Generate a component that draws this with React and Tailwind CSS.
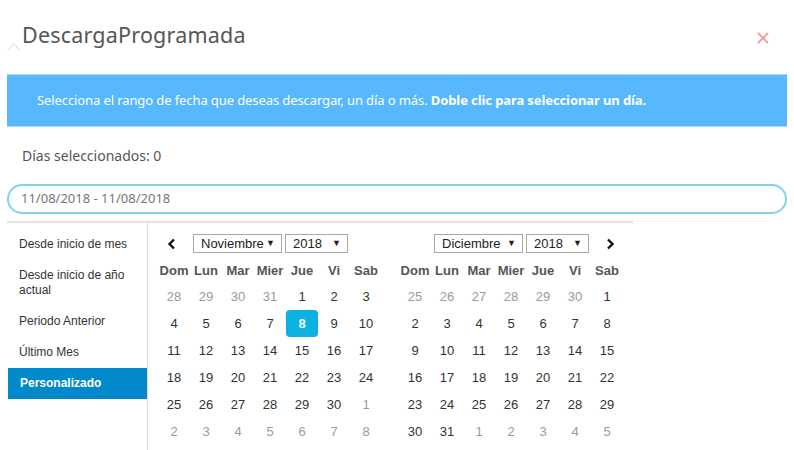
import React from "react";

const headers = ["Dom", "Lun", "Mar", "Mier", "Jue", "Vi", "Sab"];

const nov = [
  [28, 1], [29, 1], [30, 1], [31, 1], [1, 0], [2, 0], [3, 0],
  [4, 0], [5, 0], [6, 0], [7, 0], [8, 2], [9, 0], [10, 0],
  [11, 0], [12, 0], [13, 0], [14, 0], [15, 0], [16, 0], [17, 0],
  [18, 0], [19, 0], [20, 0], [21, 0], [22, 0], [23, 0], [24, 0],
  [25, 0], [26, 0], [27, 0], [28, 0], [29, 0], [30, 0], [1, 1],
  [2, 1], [3, 1], [4, 1], [5, 1], [6, 1], [7, 1], [8, 1],
];
const dic = [
  [25, 1], [26, 1], [27, 1], [28, 1], [29, 1], [30, 1], [1, 0],
  [2, 0], [3, 0], [4, 0], [5, 0], [6, 0], [7, 0], [8, 0],
  [9, 0], [10, 0], [11, 0], [12, 0], [13, 0], [14, 0], [15, 0],
  [16, 0], [17, 0], [18, 0], [19, 0], [20, 0], [21, 0], [22, 0],
  [23, 0], [24, 0], [25, 0], [26, 0], [27, 0], [28, 0], [29, 0],
  [30, 0], [31, 0], [1, 1], [2, 1], [3, 1], [4, 1], [5, 1],
];

function Select({ label, w }) {
  return (
    <div
      className={`${w} h-[19px] border border-[#a9a9a9] bg-white flex items-center justify-between pl-[7px] pr-[6px] text-[13px] text-[#222]`}
    >
      <span>{label}</span>
      <span className="text-[9px] text-[#222]">▼</span>
    </div>
  );
}

function Month({ days, left }) {
  return (
    <div className="w-[224px]">
      <div className="h-[29px] flex items-center">
        {left ? (
          <>
            <svg width="10" height="12" viewBox="0 0 10 12" className="ml-[9px] mr-[16px]">
              <path d="M7 1.5 L2.5 6 L7 10.5" stroke="#111" strokeWidth="2.4" fill="none" />
            </svg>
            <Select label="Noviembre" w="w-[89px]" />
            <div className="w-[3px]" />
            <Select label="2018" w="w-[63px]" />
          </>
        ) : (
          <>
            <div className="w-[35px]" />
            <Select label="Diciembre" w="w-[89px]" />
            <div className="w-[3px]" />
            <Select label="2018" w="w-[63px]" />
            <svg width="10" height="12" viewBox="0 0 10 12" className="ml-[16px]">
              <path d="M3 1.5 L7.5 6 L3 10.5" stroke="#111" strokeWidth="2.4" fill="none" />
            </svg>
          </>
        )}
      </div>
      <div className="grid grid-cols-7 h-[25px] items-center text-[13px] font-bold text-[#555] text-center">
        {headers.map((h) => (
          <div key={h}>{h}</div>
        ))}
      </div>
      <div className="grid grid-cols-7 text-[13px] text-center">
        {days.map(([d, s], i) => (
          <div key={i} className="h-[27px] flex items-center justify-center">
            {s === 2 ? (
              <div className="w-[32px] h-[27px] rounded-[4px] bg-[#0bb2df] text-white font-bold flex items-center justify-center">
                {d}
              </div>
            ) : (
              <span className={s === 1 ? "text-[#9a9a9a]" : "text-[#333]"}>{d}</span>
            )}
          </div>
        ))}
      </div>
    </div>
  );
}

export default function App() {
  const sidebar = [
    "Desde inicio de mes",
    "Desde inicio de año actual",
    "Periodo Anterior",
    "Último Mes",
  ];
  return (
    <div className="w-[794px] h-[450px] bg-white overflow-hidden relative" style={{ fontFamily: '"Liberation Sans", Arial, sans-serif' }}>
      <div className="h-[74px] relative" style={{ fontFamily: '"Noto Sans", "Liberation Sans", sans-serif' }}>
        <div className="absolute left-[22px] top-[19px] text-[21.5px] text-[#555] tracking-[0.2px]">DescargaProgramada</div>
        <svg className="absolute left-[7px] top-[42px]" width="14" height="9" viewBox="0 0 14 9">
          <path d="M1 8 L7 2 L13 8" stroke="#e6e6e6" strokeWidth="1.2" fill="none" />
        </svg>
        <svg className="absolute left-[757px] top-[32px]" width="12" height="12" viewBox="0 0 12 12">
          <path d="M1 1 L11 11 M11 1 L1 11" stroke="#f49a9a" strokeWidth="1.8" />
        </svg>
      </div>
      <div
        className="mx-[7px] h-[53px] bg-[#57b8fe] border-y border-[#a9d9fd] flex items-center pl-[30px] text-[13px] text-white"
        style={{ fontFamily: '"Noto Sans", "Liberation Sans", sans-serif' }}
      >
        <span className="tracking-[-0.1px]">
          Selecciona el rango de fecha que deseas descargar, un día o más.{" "}
          <span className="font-bold">Doble clic para seleccionar un día.</span>
        </span>
      </div>
      <div
        className="pl-[22px] h-[57px] flex items-center text-[14px] text-[#555]"
        style={{ fontFamily: '"Noto Sans", "Liberation Sans", sans-serif' }}
      >
        Días seleccionados: 0
      </div>
      <div
        className="mx-[7px] h-[30px] rounded-full border-2 border-[#82d3ea] flex items-center pl-[12px] text-[13px] text-[#777]"
        style={{ fontFamily: '"Noto Sans", "Liberation Sans", sans-serif' }}
      >
        11/08/2018 - 11/08/2018
      </div>
      <div className="ml-[7px] mt-[7px] w-[626px] border-t-2 border-[#e3e3e3] flex h-[240px]">
        <div className="w-[141px] border-r border-[#dcdcdc] pt-[6px] text-[12px] text-[#333]">
          {sidebar.map((s) => (
            <div key={s} className="pl-[12px] pr-[14px] py-[8px] leading-[15px]">
              {s}
            </div>
          ))}
          <div className="pl-[12px] py-[8px] leading-[15px] bg-[#0189cc] text-white font-bold ml-[1px]">
            Personalizado
          </div>
        </div>
        <div className="flex pl-[10px] pt-[6px] gap-[17px]">
          <Month days={nov} left />
          <Month days={dic} />
        </div>
      </div>
    </div>
  );
}
